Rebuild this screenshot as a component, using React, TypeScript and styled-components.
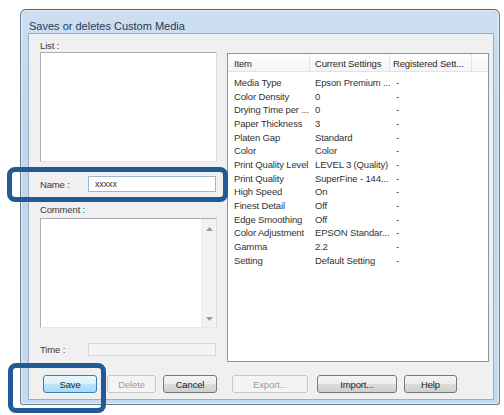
import React from "react";
import styled, { createGlobalStyle, css } from "styled-components";

const GlobalStyle = createGlobalStyle`
	html, body {
		margin: 0;
		padding: 0;
		background: #ffffff;
	}
	body {
		font-family: "Liberation Sans", Arial, sans-serif;
		font-size: 9.5px;
		letter-spacing: -0.15px;
		color: #2c2c2c;
	}
`;

const Page = styled.div`
	position: relative;
	width: 504px;
	height: 415px;
	box-sizing: border-box;
	padding: 9px 4px 0 20px;
	overflow: hidden;
`;

const Window = styled.div`
	width: 480px;
	height: 396px;
	box-sizing: border-box;
	display: flex;
	flex-direction: column;
	padding: 0 5px 4px 7px;
	border: 1px solid #6b7d90;
	border-top-color: #4f6175;
	border-radius: 6px 6px 3px 3px;
	background: linear-gradient(to bottom, #cddff1 0%, #c1d6ec 30%, #c6daef 100%);
	box-shadow: inset 0 0 0 1px rgba(255, 255, 255, 0.55);
`;

const TitleBar = styled.div`
	height: 23px;
	display: flex;
	align-items: flex-end;
	padding: 0 0 1px 1px;
	box-sizing: border-box;
	font-size: 11px;
	letter-spacing: 0;
	color: #243a55;
`;

const Client = styled.div`
	flex: 1;
	display: flex;
	flex-direction: column;
	background: #f0f0f0;
	border: 1px solid #9aafc6;
	padding: 6px 4px 0 11px;
`;

const TopSection = styled.div`
	display: flex;
	gap: 10px;
	height: 322px;
`;

const LeftColumn = styled.div`
	width: 177px;
	display: flex;
	flex-direction: column;
`;

const Label = styled.div<{ $top?: number }>`
	height: 12px;
	line-height: 12px;
	margin-top: ${(p) => p.$top ?? 0}px;
	color: #3a3a3a;
`;

const Box = styled.div<{ $height: number; $top?: number }>`
	position: relative;
	height: ${(p) => p.$height}px;
	margin-top: ${(p) => p.$top ?? 0}px;
	box-sizing: border-box;
	background: #fff;
	border: 1px solid #abadb3;
	border-right-color: #dbdfe6;
	border-bottom-color: #e3e9ef;
`;

const FieldRow = styled.div<{ $top: number; $height: number }>`
	display: flex;
	align-items: center;
	margin-top: ${(p) => p.$top}px;
	height: ${(p) => p.$height}px;
`;

const FieldLabel = styled.div`
	width: 48px;
	color: #3a3a3a;
`;

const TextInput = styled.div<{ $disabled?: boolean }>`
	width: 128px;
	height: 100%;
	box-sizing: border-box;
	display: flex;
	align-items: center;
	padding-left: 6px;
	font-size: 9px;
	color: #333;
	${(p) =>
		p.$disabled
			? css`
					background: #f4f4f4;
					border: 1px solid #d9d9d9;
			  `
			: css`
					background: #fff;
					border: 1px solid #9fb6cf;
			  `}
`;

const ScrollBar = styled.div`
	position: absolute;
	top: 0;
	right: 0;
	bottom: 0;
	width: 14px;
	display: flex;
	flex-direction: column;
	justify-content: space-between;
	align-items: center;
	padding: 8px 0 6px;
	background: #f2f2f2;
	border-left: 1px solid #ededed;
`;

const Arrow = ({ down }: { down?: boolean }) => (
	<svg width="7" height="4" viewBox="0 0 7 4">
		<path d={down ? "M0 0 L7 0 L3.5 4 Z" : "M0 4 L7 4 L3.5 0 Z"} fill="#9a9a9a" />
	</svg>
);

const RightColumn = styled.div`
	flex: 1;
	padding-top: 13px;
`;

const ListView = styled.div`
	height: 309px;
	box-sizing: border-box;
	background: #fff;
	border: 1px solid #8e9299;
	overflow: hidden;
`;

const columns = "82px 80px 82px 1fr";

const Header = styled.div`
	display: grid;
	grid-template-columns: ${columns};
	height: 17px;
	background: linear-gradient(to bottom, #ffffff, #f4f5f7);
	border-bottom: 1px solid #dfe2e6;
	margin-bottom: 4px;
`;

const HeaderCell = styled.div<{ $pad: number }>`
	display: flex;
	align-items: center;
	padding: 2px 0 0 ${(p) => p.$pad}px;
	border-right: 1px solid #e2e4e8;
	white-space: nowrap;
	overflow: hidden;
	color: #2a2a2a;
	&:last-child {
		border-right: none;
	}
`;

const Row = styled.div`
	display: grid;
	grid-template-columns: ${columns};
	height: 13.66px;
	line-height: 13.66px;
`;

const Cell = styled.div<{ $pad: number }>`
	padding-left: ${(p) => p.$pad}px;
	white-space: nowrap;
	overflow: hidden;
	color: #333;
`;

const ButtonRow = styled.div`
	display: flex;
	margin-top: 13px;
	padding-left: 3px;
`;

type ButtonKind = "default" | "normal" | "disabled";

const Button = styled.div<{ $w: number; $gap: number; $kind: ButtonKind }>`
	width: ${(p) => p.$w}px;
	height: 18px;
	margin-left: ${(p) => p.$gap}px;
	box-sizing: border-box;
	display: flex;
	align-items: center;
	justify-content: center;
	border-radius: 3px;
	${(p) =>
		p.$kind === "default"
			? css`
					border: 1px solid #3c7fb1;
					background: linear-gradient(to bottom, #eaf6fd 0%, #d9f0fc 50%, #bee6fd 50%, #a7d9f5 100%);
					color: #1e1e1e;
			  `
			: p.$kind === "disabled"
			? css`
					border: 1px solid #c4c7ca;
					background: #f4f4f4;
					color: #9c9c9c;
			  `
			: css`
					border: 1px solid #7a7a7a;
					background: linear-gradient(to bottom, #f4f4f4 0%, #ebebeb 50%, #dddddd 50%, #cfcfcf 100%);
					color: #1e1e1e;
			  `}
`;

const Callout = styled.div<{ $x: number; $y: number; $w: number; $h: number }>`
	position: absolute;
	left: ${(p) => p.$x}px;
	top: ${(p) => p.$y}px;
	width: ${(p) => p.$w}px;
	height: ${(p) => p.$h}px;
	box-sizing: border-box;
	border: 5px solid #1f5b96;
	border-radius: 8px;
	pointer-events: none;
`;

const settings: [string, string, string][] = [
	["Media Type", "Epson Premium ...", "-"],
	["Color Density", "0", "-"],
	["Drying Time per ...", "0", "-"],
	["Paper Thickness", "3", "-"],
	["Platen Gap", "Standard", "-"],
	["Color", "Color", "-"],
	["Print Quality Level", "LEVEL 3 (Quality)", "-"],
	["Print Quality", "SuperFine - 144...", "-"],
	["High Speed", "On", "-"],
	["Finest Detail", "Off", "-"],
	["Edge Smoothing", "Off", "-"],
	["Color Adjustment", "EPSON Standar...", "-"],
	["Gamma", "2.2", "-"],
	["Setting", "Default Setting", "-"],
];

const buttons: { label: string; w: number; gap: number; kind: ButtonKind }[] = [
	{ label: "Save", w: 54, gap: 0, kind: "default" },
	{ label: "Delete", w: 49, gap: 10, kind: "disabled" },
	{ label: "Cancel", w: 54, gap: 7, kind: "normal" },
	{ label: "Export...", w: 76, gap: 15, kind: "disabled" },
	{ label: "Import...", w: 80, gap: 9, kind: "normal" },
	{ label: "Help", w: 53, gap: 7, kind: "normal" },
];

export default function App() {
	return (
		<>
			<GlobalStyle />
			<Page>
				<Window>
					<TitleBar>Saves or deletes Custom Media</TitleBar>
					<Client>
						<TopSection>
							<LeftColumn>
								<Label>List :</Label>
								<Box $height={110} />
								<FieldRow $top={14} $height={16}>
									<FieldLabel>Name :</FieldLabel>
									<TextInput>xxxxx</TextInput>
								</FieldRow>
								<Label $top={12}>Comment :</Label>
								<Box $height={110} $top={2}>
									<ScrollBar>
										<Arrow />
										<Arrow down />
									</ScrollBar>
								</Box>
								<FieldRow $top={15} $height={13}>
									<FieldLabel>Time :</FieldLabel>
									<TextInput $disabled />
								</FieldRow>
							</LeftColumn>
							<RightColumn>
								<ListView>
									<Header>
										<HeaderCell $pad={6}>Item</HeaderCell>
										<HeaderCell $pad={5}>Current Settings</HeaderCell>
										<HeaderCell $pad={3}>Registered Sett...</HeaderCell>
										<HeaderCell $pad={0} />
									</Header>
									{settings.map(([item, current, registered]) => (
										<Row key={item}>
											<Cell $pad={6}>{item}</Cell>
											<Cell $pad={5}>{current}</Cell>
											<Cell $pad={6}>{registered}</Cell>
										</Row>
									))}
								</ListView>
							</RightColumn>
						</TopSection>
						<ButtonRow>
							{buttons.map((b) => (
								<Button key={b.label} $w={b.w} $gap={b.gap} $kind={b.kind}>
									{b.label}
								</Button>
							))}
						</ButtonRow>
					</Client>
				</Window>
				<Callout $x={7} $y={167} $w={221} $h={35} />
				<Callout $x={8} $y={363} $w={98} $h={50} />
			</Page>
		</>
	);
}
